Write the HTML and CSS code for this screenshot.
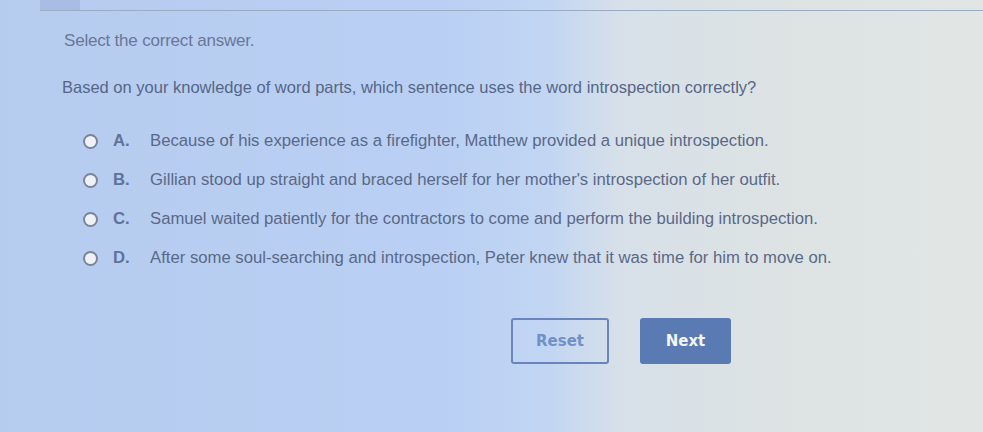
FILE: index.html
```html
<!DOCTYPE html>
<html>
<head>
<meta charset="utf-8">
<link rel="stylesheet" href="styles.css">
</head>
<body>
<div class="page">
  <div class="topbar"><div class="tab"></div></div>
  <div class="content">
    <p class="instr">Select the correct answer.</p>
    <p class="question">Based on your knowledge of word parts, which sentence uses the word introspection correctly?</p>
    <ul class="options">
      <li class="opt"><span class="radio"></span><span class="letter">A.</span><span class="text">Because of his experience as a firefighter, Matthew provided a unique introspection.</span></li>
      <li class="opt"><span class="radio"></span><span class="letter">B.</span><span class="text">Gillian stood up straight and braced herself for her mother's introspection of her outfit.</span></li>
      <li class="opt"><span class="radio"></span><span class="letter">C.</span><span class="text">Samuel waited patiently for the contractors to come and perform the building introspection.</span></li>
      <li class="opt"><span class="radio"></span><span class="letter">D.</span><span class="text">After some soul-searching and introspection, Peter knew that it was time for him to move on.</span></li>
    </ul>
    <div class="actions">
      <button class="btn reset">Reset</button>
      <button class="btn next">Next</button>
    </div>
  </div>
</div>
</body>
</html>
```
FILE: styles.css
```css
html, body {
  margin: 0;
  padding: 0;
}
body {
  width: 983px;
  height: 432px;
  overflow: hidden;
  font-family: "Liberation Sans", Arial, sans-serif;
  background: linear-gradient(90deg, #b5ccef 0%, #b9d0f4 45%, #c2d6f3 56%, #d7e0e9 63%, #dde3e3 80%, #e1e6e5 100%);
}
.page {
  height: 432px;
  display: flex;
  flex-direction: column;
}
.topbar {
  height: 10px;
  margin-left: 40px;
  border-bottom: 1px solid #9aabc4;
  display: flex;
}
.tab {
  width: 40px;
  height: 10px;
  background: #a7bde3;
}
.content {
  padding-left: 62px;
  display: flex;
  flex-direction: column;
}
.instr {
  margin: 20px 0 0 2px;
  font-size: 17px;
  color: #6a7796;
  line-height: 20px;
  letter-spacing: -0.2px;
}
.question {
  margin: 26px 0 0 0;
  font-size: 16.5px;
  color: #566686;
  line-height: 20px;
}
.options {
  list-style: none;
  margin: 34px 0 0 0;
  padding: 0 0 0 21px;
  display: flex;
  flex-direction: column;
  gap: 19px;
}
.opt {
  display: flex;
  align-items: center;
  height: 20px;
  font-size: 16.7px;
  color: #5a6987;
}
.radio {
  width: 11px;
  height: 11px;
  border: 2px solid #7b8499;
  border-radius: 50%;
  background: #eef2f8;
  margin-right: 15px;
}
.letter {
  font-weight: bold;
  color: #607399;
  width: 37px;
}
.actions {
  display: flex;
  gap: 31px;
  margin: 50px 0 0 449px;
}
.btn {
  height: 46px;
  border-radius: 3px;
  font-family: "DejaVu Sans", sans-serif;
  font-weight: bold;
  font-size: 15px;
  cursor: pointer;
}
.reset {
  width: 98px;
  background: transparent;
  border: 2px solid #6a85be;
  color: #7290c6;
}
.next {
  width: 91px;
  background: #5a7ab3;
  border: none;
  color: #f2f5fb;
}
```
